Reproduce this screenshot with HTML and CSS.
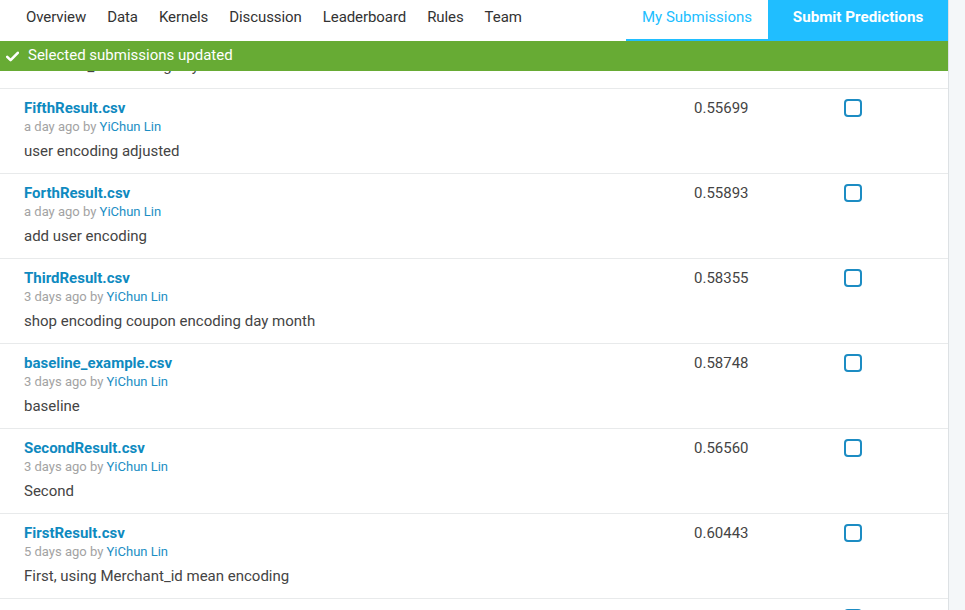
FILE: index.html
```html
<!DOCTYPE html>
<html>
<head>
<meta charset="utf-8">
<link rel="stylesheet" href="styles.css">
</head>
<body>
<div class="page">
  <div class="main">
    <nav class="nav">
      <ul class="tabs">
        <li class="tab">Overview</li>
        <li class="tab">Data</li>
        <li class="tab">Kernels</li>
        <li class="tab">Discussion</li>
        <li class="tab">Leaderboard</li>
        <li class="tab">Rules</li>
        <li class="tab">Team</li>
      </ul>
      <div class="nav-right">
        <a class="tab-active">My Submissions</a>
        <a class="submit-btn">Submit Predictions</a>
      </div>
    </nav>
    <div class="viewport">
      <div class="notice">
        <svg class="check" width="13" height="11" viewBox="0 0 13 11"><path d="M1.2 5.8 L4.6 9.2 L11.8 1.8" fill="none" stroke="#fff" stroke-width="2.6" stroke-linecap="round" stroke-linejoin="round"/></svg>
        <span>Selected submissions updated</span>
      </div>
      <div class="list">
        <div class="row">
          <div class="info">
            <div class="title">SixthResult.csv</div>
            <div class="meta">a day ago by <span class="user">YiChun Lin</span></div>
            <div class="desc">merchant_id encoding day</div>
          </div>
          <div class="score">0.55612</div>
          <div class="select"><span class="box"></span></div>
        </div>
        <div class="row">
          <div class="info">
            <div class="title">FifthResult.csv</div>
            <div class="meta">a day ago by <span class="user">YiChun Lin</span></div>
            <div class="desc">user encoding adjusted</div>
          </div>
          <div class="score">0.55699</div>
          <div class="select"><span class="box"></span></div>
        </div>
        <div class="row">
          <div class="info">
            <div class="title">ForthResult.csv</div>
            <div class="meta">a day ago by <span class="user">YiChun Lin</span></div>
            <div class="desc">add user encoding</div>
          </div>
          <div class="score">0.55893</div>
          <div class="select"><span class="box"></span></div>
        </div>
        <div class="row">
          <div class="info">
            <div class="title">ThirdResult.csv</div>
            <div class="meta">3 days ago by <span class="user">YiChun Lin</span></div>
            <div class="desc">shop encoding coupon encoding day month</div>
          </div>
          <div class="score">0.58355</div>
          <div class="select"><span class="box"></span></div>
        </div>
        <div class="row">
          <div class="info">
            <div class="title">baseline_example.csv</div>
            <div class="meta">3 days ago by <span class="user">YiChun Lin</span></div>
            <div class="desc">baseline</div>
          </div>
          <div class="score">0.58748</div>
          <div class="select"><span class="box"></span></div>
        </div>
        <div class="row">
          <div class="info">
            <div class="title">SecondResult.csv</div>
            <div class="meta">3 days ago by <span class="user">YiChun Lin</span></div>
            <div class="desc">Second</div>
          </div>
          <div class="score">0.56560</div>
          <div class="select"><span class="box"></span></div>
        </div>
        <div class="row">
          <div class="info">
            <div class="title">FirstResult.csv</div>
            <div class="meta">5 days ago by <span class="user">YiChun Lin</span></div>
            <div class="desc">First, using Merchant_id mean encoding</div>
          </div>
          <div class="score">0.60443</div>
          <div class="select"><span class="box"></span></div>
        </div>
        <div class="row">
          <div class="info">
            <div class="title">sample_submission.csv</div>
            <div class="meta">5 days ago by <span class="user">YiChun Lin</span></div>
            <div class="desc">sample</div>
          </div>
          <div class="score">0.61234</div>
          <div class="select"><span class="box"></span></div>
        </div>
      </div>
    </div>
  </div>
  <div class="scrollbar"></div>
</div>
</body>
</html>
```
FILE: styles.css
```css
html, body {
  margin: 0;
  padding: 0;
  height: 100%;
  overflow: hidden;
  background: #fff;
  font-family: Roboto, "Liberation Sans", sans-serif;
}
.page {
  display: flex;
  height: 610px;
}
.main {
  width: 948px;
  display: flex;
  flex-direction: column;
  height: 610px;
}
.scrollbar {
  flex: 1;
  background: #f4f7f9;
  border-left: 1px solid #dde1e4;
}
.nav {
  height: 41px;
  display: flex;
  justify-content: space-between;
  align-items: stretch;
  flex-shrink: 0;
}
.tabs {
  list-style: none;
  margin: 0;
  padding: 0 0 0 15.5px;
  display: flex;
}
.tab {
  padding: 0 10.5px;
  font-size: 15px;
  letter-spacing: -0.08px;
  line-height: 34px;
  color: #333;
}
.nav-right {
  display: flex;
}
.tab-active {
  width: 142px;
  box-sizing: border-box;
  text-align: center;
  font-size: 15px;
  line-height: 34px;
  color: #20beff;
  border-bottom: 2px solid #20beff;
  height: 41px;
}
.submit-btn {
  width: 180px;
  background: #20beff;
  color: #fff;
  font-weight: bold;
  font-size: 15.2px;
  line-height: 34px;
  text-align: center;
}
.viewport {
  position: relative;
  flex: 1;
  overflow: hidden;
}
.notice {
  position: absolute;
  top: 0;
  left: 0;
  right: 0;
  height: 30px;
  background: #67ab34;
  color: #fff;
  font-size: 15px;
  display: flex;
  align-items: center;
  gap: 9px;
  padding-left: 6px;
  z-index: 2;
}
.notice span {
  margin-top: -2px;
}
.check {
  display: block;
  margin-top: 0;
}
.list {
  margin-top: -37px;
}
.row {
  display: flex;
  border-bottom: 1px solid #e8eaeb;
  padding: 9px 0 12px 24px;
  height: 63px;
}
.info {
  width: 670px;
}
.title {
  font-size: 15px;
  font-weight: bold;
  line-height: 20px;
  color: #0f8ac0;
}
.meta {
  font-size: 13px;
  line-height: 18px;
  color: #a3a3a3;
}
.user {
  color: #1b8ec4;
}
.desc {
  margin-top: 5px;
  font-size: 15px;
  line-height: 20px;
  color: #444;
}
.score {
  width: 150px;
  font-size: 15px;
  line-height: 20px;
  color: #444;
}
.select {
  padding-top: 1px;
}
.box {
  display: block;
  width: 18px;
  height: 18px;
  box-sizing: border-box;
  border: 2px solid #1c8cc3;
  border-radius: 4px;
}
```
